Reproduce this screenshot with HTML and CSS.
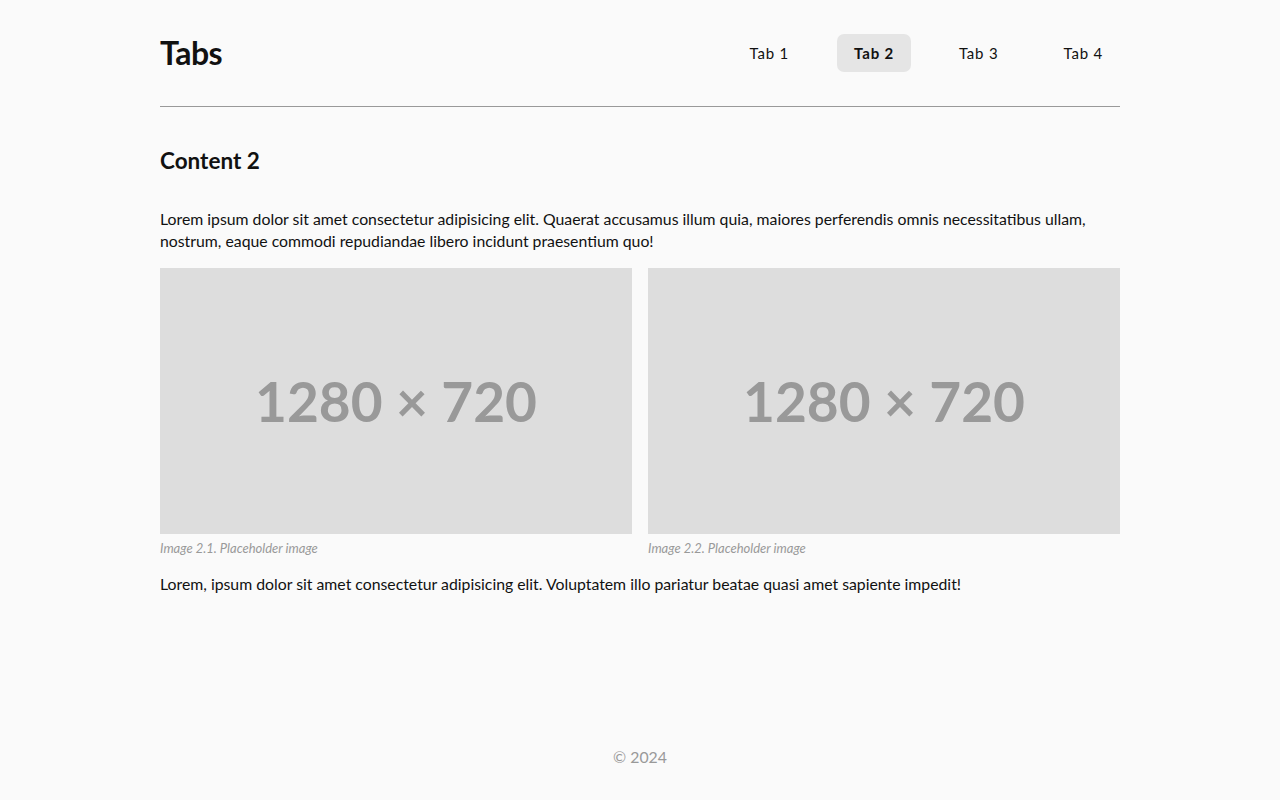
FILE: index.html
```html
<!DOCTYPE html>
<html lang="en">
<head>
<meta charset="utf-8">
<title>Tabs</title>
<link rel="stylesheet" href="styles.css">
</head>
<body>
<div class="page">
  <header class="header">
    <h1 class="title">Tabs</h1>
    <nav class="tabs">
      <a class="tab">Tab 1</a>
      <a class="tab tab-active">Tab 2</a>
      <a class="tab">Tab 3</a>
      <a class="tab">Tab 4</a>
    </nav>
  </header>
  <main class="content">
    <h2 class="heading">Content 2</h2>
    <p class="text">Lorem ipsum dolor sit amet consectetur adipisicing elit. Quaerat accusamus illum quia, maiores perferendis omnis necessitatibus ullam, nostrum, eaque commodi repudiandae libero incidunt praesentium quo!</p>
    <div class="gallery">
      <figure class="figure">
        <div class="placeholder"><span>1280 × 720</span></div>
        <figcaption class="caption">Image 2.1. Placeholder image</figcaption>
      </figure>
      <figure class="figure">
        <div class="placeholder"><span>1280 × 720</span></div>
        <figcaption class="caption">Image 2.2. Placeholder image</figcaption>
      </figure>
    </div>
    <p class="text">Lorem, ipsum dolor sit amet consectetur adipisicing elit. Voluptatem illo pariatur beatae quasi amet sapiente impedit!</p>
  </main>
  <footer class="footer">© 2024</footer>
</div>
</body>
</html>
```

FILE: styles.css
```css
* { box-sizing: border-box; }
html, body { margin: 0; padding: 0; }
body {
  background: #fafafa;
  color: #111;
  font-family: Lato, "Noto Sans", sans-serif;
  font-size: 15.8px;
  line-height: 22px;
}
.page {
  width: 960px;
  margin: 0 auto;
  min-height: 800px;
  display: flex;
  flex-direction: column;
}
.header {
  display: flex;
  align-items: center;
  justify-content: space-between;
  padding-top: 34px;
  padding-bottom: 34px;
  border-bottom: 1px solid #999;
}
.title {
  margin: 0;
  font-size: 32px;
  line-height: 38px;
  font-weight: 700;
  letter-spacing: -0.5px;
}
.tabs {
  display: flex;
  gap: 31px;
}
.tab {
  display: block;
  padding: 8px 17px;
  height: 38px;
  line-height: 22px;
  font-size: 15px;
  letter-spacing: 0.8px;
  border-radius: 7px;
  color: #111;
  cursor: pointer;
}
.tab-active {
  background: #e5e5e5;
  font-weight: 700;
}
.content {
  flex: 1;
  padding-top: 39px;
}
.heading {
  margin: 0 0 32px;
  font-size: 22.5px;
  line-height: 30px;
  font-weight: 700;
}
.text {
  margin: 0 0 16px;
}
.gallery {
  display: grid;
  grid-template-columns: 1fr 1fr;
  gap: 16px;
  margin-bottom: 16px;
}
.figure { margin: 0; }
.placeholder {
  height: 266px;
  background: #dddddd;
  display: flex;
  align-items: center;
  justify-content: center;
  color: #999;
  font-family: Lato, sans-serif;
  font-weight: 700;
  font-size: 55px;
}
.caption {
  margin-top: 6px;
  margin-bottom: 1px;
  font-size: 13px;
  line-height: 16px;
  font-style: italic;
  color: #999;
}
.footer {
  text-align: center;
  color: #999;
  padding-bottom: 32px;
}
```
